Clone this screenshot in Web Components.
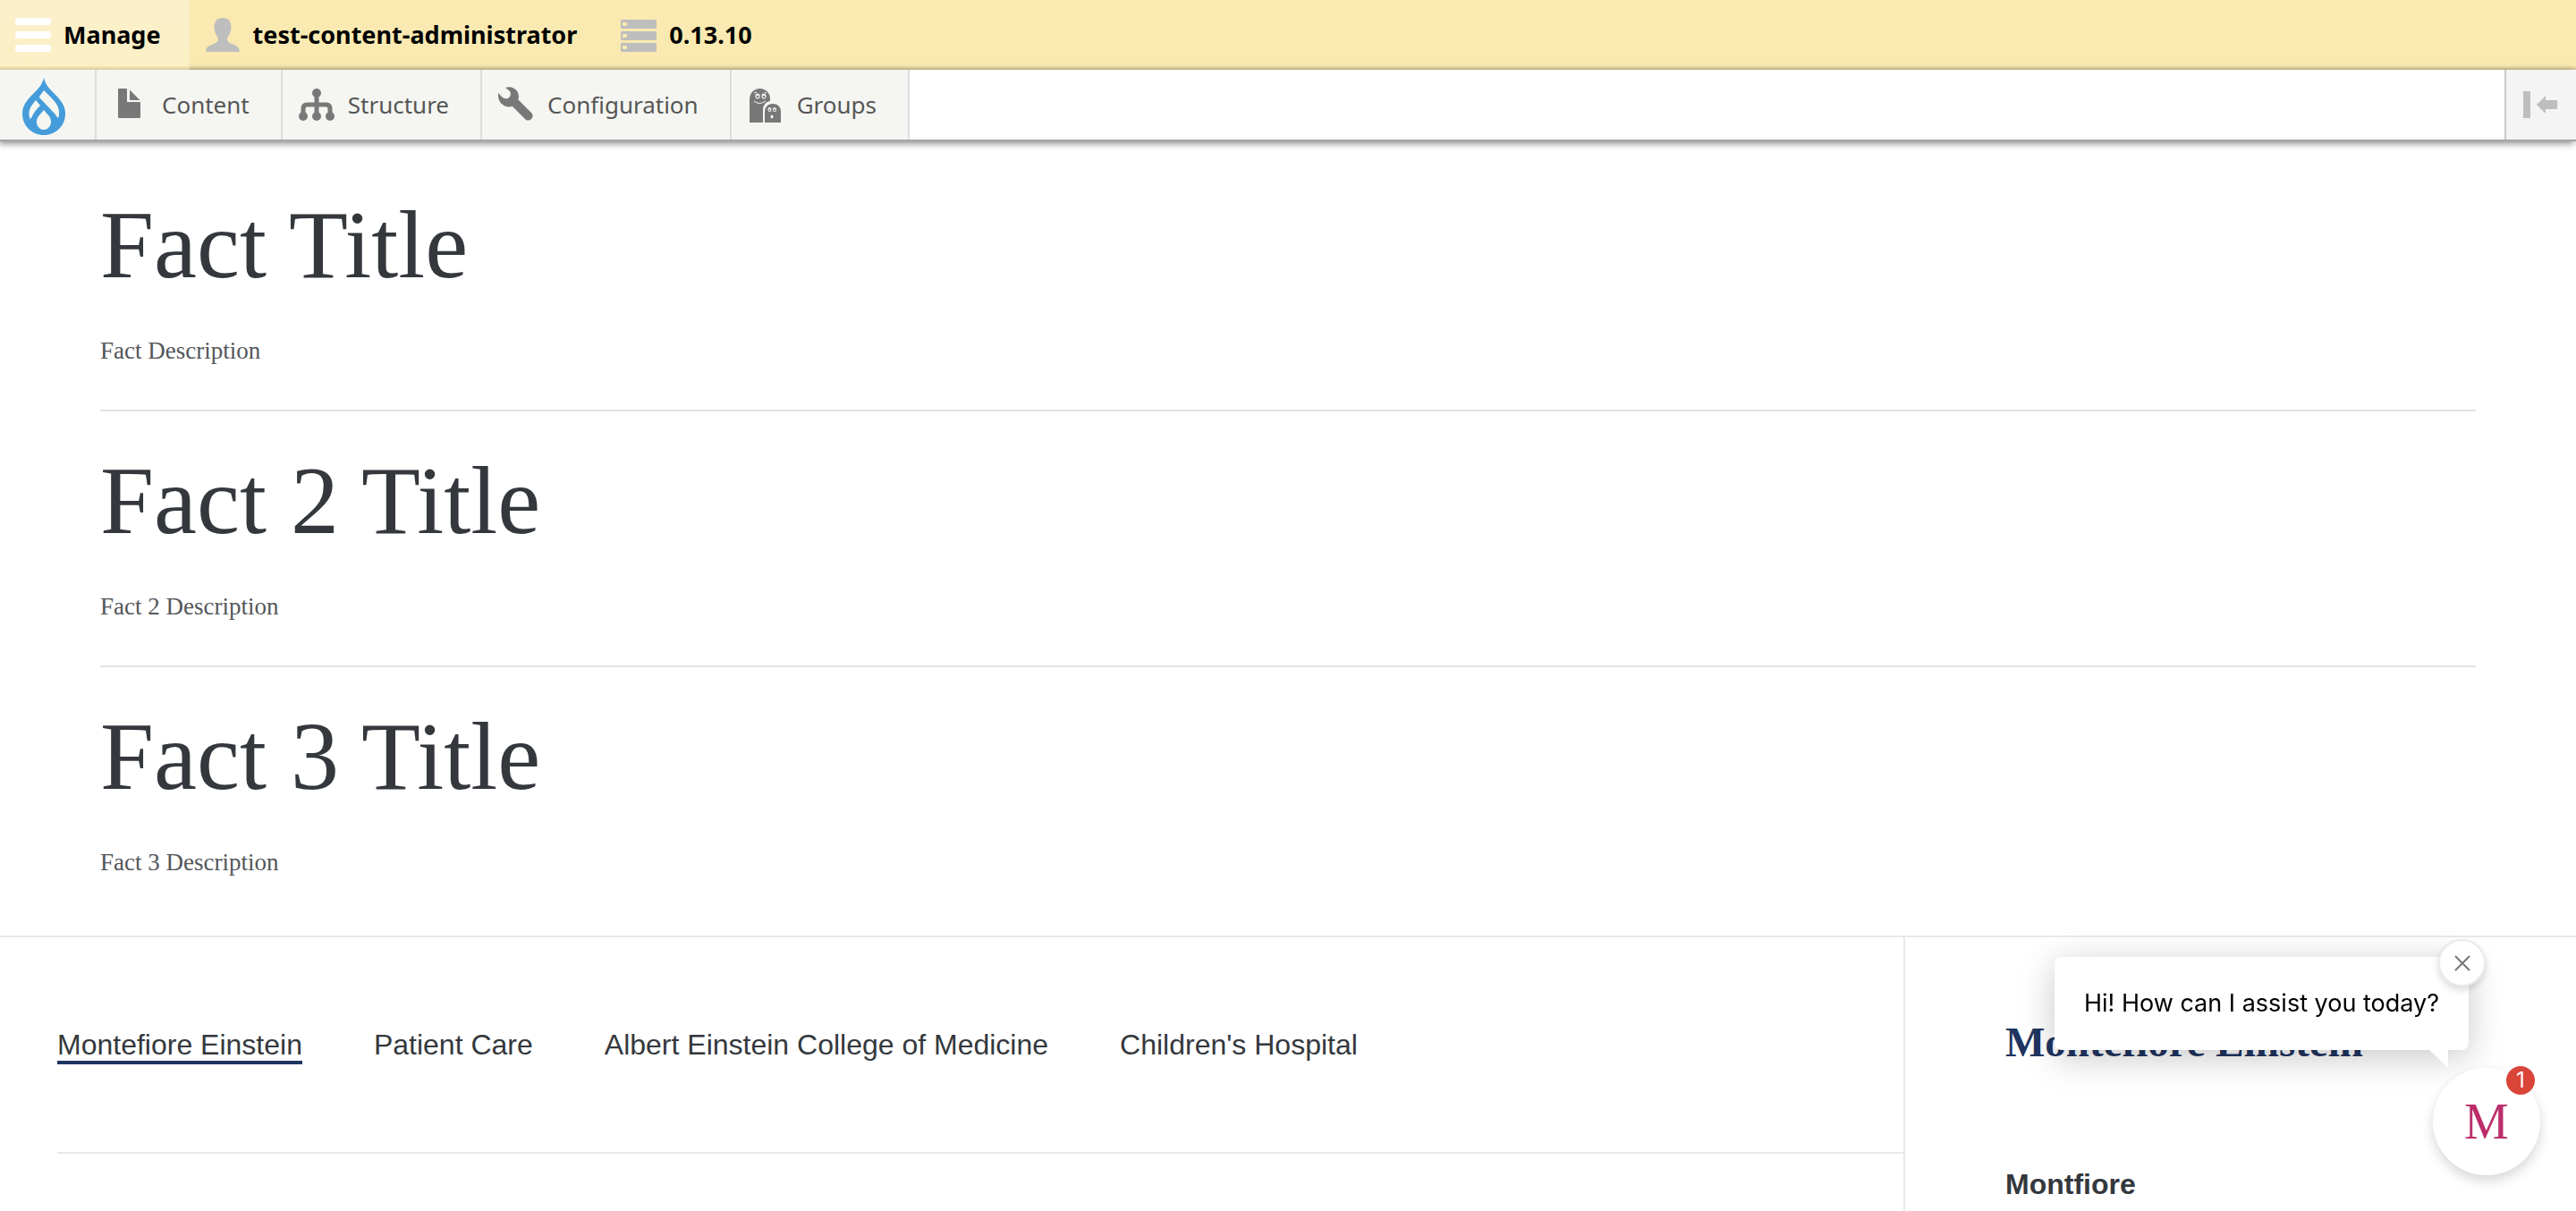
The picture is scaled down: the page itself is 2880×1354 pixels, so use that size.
<!DOCTYPE html>
<html lang="en">
<head>
<meta charset="utf-8">
<title>Facts</title>
<style>
  html, body { margin: 0; }
  body { background: #fff; font-family: "Liberation Sans", Arial, sans-serif; color: #34383d; }
</style>
</head>
<body>
<site-page></site-page>

<script>
const icons = {
  menu: '<g fill="#fff"><rect y="1" width="40" height="8" rx="3"/><rect y="16" width="40" height="8" rx="3"/><rect y="31" width="40" height="8" rx="3"/></g>',
  user: '<path fill="#bebebe" d="M20 1c-6 0-9.500 4-9.500 10 0 5 1.500 8 3.500 11 1.500 3 1 5-1 6.500C9 31 1.500 32 1.500 37v2h37v-2c0-5-7.500-6-11.500-8.500-2-1.500-2.500-3.500-1-6.500 2-3 3.500-6 3.500-11C29.500 5 26 1 20 1z"/>',
  server: '<path fill="#bebebe" fill-rule="evenodd" d="M1 3h38q1 0 1 1v8q0 1-1 1H1q-1 0-1-1V4q0-1 1-1zm2 3q-1 0-1 1v2q0 1 1 1h3q1 0 1-1V7q0-1-1-1zM1 16h38q1 0 1 1v8q0 1-1 1H1q-1 0-1-1v-8q0-1 1-1zm2 3q-1 0-1 1v2q0 1 1 1h3q1 0 1-1v-2q0-1-1-1zM1 29h38q1 0 1 1v8q0 1-1 1H1q-1 0-1-1v-8q0-1 1-1zm2 3q-1 0-1 1v2q0 1 1 1h3q1 0 1-1v-2q0-1-1-1z"/>',
  content: '<path fill="#787878" d="M7 2h8q1 0 1 1v14h14q1 0 1 1v16q0 1-1 1H7q-1 0-1-1V3q0-1 1-1zM19 3.500L30.500 15H20q-1 0-1-1z"/>',
  structure: '<g fill="#787878"><circle cx="20" cy="7" r="5"/><circle cx="5" cy="33" r="5"/><circle cx="20" cy="33" r="5"/><circle cx="35" cy="33" r="5"/></g><path fill="none" stroke="#787878" stroke-width="5" d="M20 7v26M5 33V25q0-5 4-5h22q4 0 4 5v8"/>',
  config: '<path fill="#787878" d="M8 1C16-2 23 4 23 11c0 1 0 2-1 3l15 15c2 2 2 5 0 7s-5 2-7 0L16 22C7 24 0 18 0 10V7l5 5q3 2 6 1 3-2 3-5 0-2-2-4z"/>',
  groups: '<path fill="#787878" d="M2 40V14C2 7 7 2 13.500 2S25 7 25 13v3c-5 1-8 5-8 10v14zM19 40V28c0-5 3-9 9-9s9 4 9 9v12z"/><g fill="#f5f6f2"><ellipse cx="11" cy="10.500" rx="2.500" ry="3"/><ellipse cx="18" cy="10.500" rx="2.500" ry="3"/><ellipse cx="24.500" cy="25.500" rx="2" ry="2.500"/><ellipse cx="30" cy="25.500" rx="2" ry="2.500"/><ellipse cx="27" cy="33.500" rx="1.500" ry="2"/></g><g fill="#787878"><circle cx="11" cy="11" r="1.300"/><circle cx="18" cy="11" r="1.300"/><circle cx="24.500" cy="26" r="1"/><circle cx="30" cy="26" r="1"/></g><path fill="none" stroke="#f5f6f2" d="M7 16q6 5 13 0M7 7l3-1M19 6l2 1"/>',
  collapse: '<path fill="#bebebe" d="M1 5h8v30H1zM16 20L26 10v5h13v10H26v5z"/>'
};
const icon = name => `<svg viewBox="0 0 40 40" width="40" height="40" aria-hidden="true">${icons[name]}</svg>`;

function define(name, render) {
  customElements.define(name, class extends HTMLElement {
    connectedCallback() {
      if (this.shadowRoot) return;
      this.attachShadow({ mode: 'open' }).innerHTML = render(this);
    }
  });
}

define('bar-tab', el => `
<style>
  :host { display: flex; }
  button { all: unset; box-sizing: border-box; display: flex; align-items: center; gap: 14px; padding: 0 32px 0 17px; font: 700 27px/30px "Noto Sans", "Open Sans", sans-serif; color: #000; cursor: pointer; }
  :host([active]) button { background: linear-gradient(#fcf0cc, #fbefc4 94%, #d9cb96); }
  svg { flex: none; }
</style>
<button type="button">${icon(el.getAttribute('icon'))}<span><slot></slot></span></button>`);

define('tray-item', el => `
<style>
  :host { display: flex; border-right: 2px solid #dddddd; background: #f5f6f2; }
  a { display: flex; align-items: center; gap: 15px; padding: 0 35px 0 18px; font: 400 26px/30px "Noto Sans", "Open Sans", sans-serif; color: #565656; text-decoration: none; }
  svg { flex: none; }
</style>
<a href="#">${icon(el.getAttribute('icon'))}<span><slot></slot></span></a>`);

define('admin-toolbar', () => `
<style>
  :host { display: block; position: relative; z-index: 1; }
  .bar { display: flex; height: 78px; background: linear-gradient(#faeab1 94%, #d9cb96); }
  .tray { display: flex; height: 78px; background: #fff; border-bottom: 2px solid #a5a6a8; box-shadow: -2px 2px 8px rgba(0,0,0,.5); }
  .home { display: flex; align-items: center; padding: 4px 33px 0 25px; background: #f5f6f2; border-right: 2px solid #dddddd; }
  .toggle { all: unset; display: flex; align-items: center; margin-left: auto; padding: 0 20px 0 18px; border-left: 2px solid #c8c8c8; background: #f4f4f4; cursor: pointer; }
</style>
<nav class="bar" aria-label="Toolbar">
  <bar-tab icon="menu" active>Manage</bar-tab>
  <bar-tab icon="user">test-content-administrator</bar-tab>
  <bar-tab icon="server">0.13.10</bar-tab>
</nav>
<nav class="tray" aria-label="Administration menu">
  <a class="home" href="#" aria-label="Home">
    <svg viewBox="0 0 48 64" width="48" height="64" aria-hidden="true">
      <path fill="#459cda" d="M24 0C22 8 18 12 12 18 5 25 0 31 0 40c0 14 11 24 24 24s24-10 24-24c0-9-5-15-12-22C30 12 26 8 24 0z"/>
      <path fill="#f5f6f2" d="M24 14c3 3 6 6 9 9 5 5 8 10 8 16 0 2 0 4-1 6-1-1-2-2-3-4L19 22c0-2 3-5 5-8zM15 25l5 6c-5 5-8 9-10 14-1 1-2 1-2-1-2-8 2-13 7-19zM24 36l6 7c5 7 0 15-6 15s-11-8-6-15z"/>
    </svg>
  </a>
  <tray-item icon="content">Content</tray-item>
  <tray-item icon="structure">Structure</tray-item>
  <tray-item icon="config">Configuration</tray-item>
  <tray-item icon="groups">Groups</tray-item>
  <button class="toggle" type="button" aria-label="Vertical orientation">${icon('collapse')}</button>
</nav>`);

define('fact-item', () => `
<style>
  :host { display: block; padding: 40px 0 48px; border-bottom: 2px solid #e3e3e3; font-family: "Liberation Serif", "Times New Roman", serif; }
  :host(:last-of-type) { border-bottom: 0; }
  h2 { margin: 0 0 40px; font-weight: 400; font-size: 108px; line-height: 120px; color: #34383d; }
  p { margin: 0; font-size: 27px; line-height: 36px; color: #53565a; }
</style>
<h2><slot name="title"></slot></h2>
<p><slot></slot></p>`);

define('footer-nav', () => `
<style>
  :host { display: block; padding-left: 64px; border-right: 2px solid #e5e9ed; }
  nav { display: flex; gap: 80px; padding: 102px 0 98px; border-bottom: 2px solid #e5e9ed; }
  a { color: #34383d; text-decoration: none; font-size: 32px; line-height: 36px; border-bottom: 4px solid transparent; }
  a[aria-current] { border-color: #1f3561; }
</style>
<nav aria-label="Sites">
  <a href="#" aria-current="true">Montefiore Einstein</a>
  <a href="#">Patient Care</a>
  <a href="#">Albert Einstein College of Medicine</a>
  <a href="#">Children's Hospital</a>
</nav>`);

define('footer-brand', () => `
<style>
  :host { display: block; padding: 87px 40px 8px 112px; }
  .logo { display: block; font: 700 47px/60px "Liberation Serif", "Times New Roman", serif; color: #1f3561; text-decoration: none; white-space: nowrap; }
  h3 { margin: 109px 0 0; font-size: 32px; line-height: 40px; color: #34383d; }
</style>
<a class="logo" href="#">Montefiore Einstein</a>
<h3>Montfiore</h3>`);

define('chat-widget', () => `
<style>
  :host { position: fixed; right: 40px; bottom: 40px; z-index: 2; display: flex; flex-direction: column; align-items: flex-end; gap: 20px; }
  .bubble { position: relative; margin-right: 80px; padding: 36px 33px; border-radius: 8px; background: #fff; font: 400 27px/32px Inter, sans-serif; color: #000; box-shadow: 0 8px 40px rgba(0,0,0,.22); }
  .tail { position: absolute; right: 23px; bottom: -20px; width: 21px; height: 20px; background: #fff; clip-path: polygon(0 0, 100% 0, 100% 100%); }
  button { all: unset; box-sizing: border-box; cursor: pointer; display: grid; place-items: center; border-radius: 50%; background: #fff; }
  .close { position: absolute; top: -20px; right: -19px; width: 53px; height: 53px; border: 2px solid #ebebeb; box-shadow: 0 4px 8px rgba(0,0,0,.15); }
  .launch { position: relative; width: 120px; height: 120px; font: 400 56px/60px "Liberation Serif", serif; color: #bb2e6b; box-shadow: 0 6px 14px rgba(0,0,0,.16); }
  .badge { position: absolute; top: -2px; right: 6px; width: 32px; height: 32px; border-radius: 50%; background: #da453a; color: #fff; font: 400 24px/32px Inter, sans-serif; text-align: center; }
</style>
<div class="bubble">Hi! How can I assist you today?<span class="tail"></span>
  <button class="close" type="button" aria-label="Close"><svg width="18" height="18" viewBox="0 0 18 18"><path d="M1 1l16 16M17 1L1 17" stroke="#777" stroke-width="2"/></svg></button>
</div>
<button class="launch" type="button" aria-label="Open chat">M<span class="badge">1</span></button>`);

define('site-page', () => `
<style>
  :host { display: flex; flex-direction: column; height: 100vh; overflow: hidden; }
  main { padding: 16px 112px; }
  footer { flex: 1; display: grid; grid-template-columns: 1fr 750px; border-top: 2px solid #e5e9ed; }
</style>
<admin-toolbar></admin-toolbar>
<main>
  <fact-item><span slot="title">Fact Title</span>Fact Description</fact-item>
  <fact-item><span slot="title">Fact 2 Title</span>Fact 2 Description</fact-item>
  <fact-item><span slot="title">Fact 3 Title</span>Fact 3 Description</fact-item>
</main>
<footer>
  <footer-nav></footer-nav>
  <footer-brand></footer-brand>
</footer>
<chat-widget></chat-widget>`);
</script>
</body>
</html>
